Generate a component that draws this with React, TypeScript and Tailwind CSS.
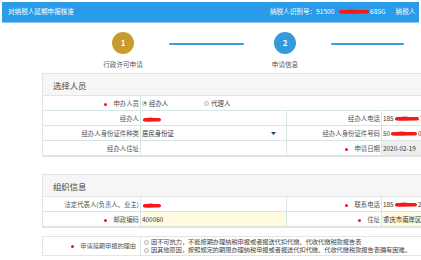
import React from 'react';

const font = { fontFamily: '"Noto Sans CJK SC", "Noto Sans", sans-serif' };

const Blob: React.FC<{ w: number }> = ({ w }) => (
  <svg width={w} height={7} viewBox={`0 0 ${w} 7`} className="inline-block align-middle">
    <path d={`M1 4 Q ${w * 0.3} 0.5 ${w * 0.6} 2 T ${w - 1} 3.5 Q ${w * 0.6} 6.5 1 5 Z`} fill="#f41b1b" />
    <rect x={1} y={2} width={w - 2} height={3.6} rx={1.8} fill="#f41b1b" />
  </svg>
);

const Req: React.FC = () => (
  <span className="inline-block w-[3px] h-[3px] rounded-full bg-[#e41b1b] mr-[6px] align-middle" />
);

const Radio: React.FC<{ on?: boolean }> = ({ on }) => (
  <span className="inline-flex items-center justify-center w-[5px] h-[5px] rounded-full border border-[#b8b8b8] bg-[#f2f2f2] mr-[2px] shrink-0">
    {on && <span className="w-[2px] h-[2px] rounded-full bg-[#666]" />}
  </span>
);

const Row: React.FC<{
  l1: React.ReactNode;
  v1?: React.ReactNode;
  l2: React.ReactNode;
  v2?: React.ReactNode;
  v1cls?: string;
  v2cls?: string;
}> = ({ l1, v1, l2, v2, v1cls = '', v2cls = '' }) => (
  <div className="flex h-[15px] border-b border-[#d8e5e5] text-[6.4px] leading-[15px]">
    <div className="w-[98px] shrink-0 text-right pr-[1px] text-[#555] border-r border-[#d8e5e5]">{l1}</div>
    <div className={`w-[146px] shrink-0 pl-[1px] text-[#333] border-r border-[#d8e5e5] relative ${v1cls}`}>{v1}</div>
    <div className="w-[95px] shrink-0 text-right pr-[1px] text-[#555] border-r border-[#d8e5e5]">{l2}</div>
    <div className={`flex-1 pl-[1px] text-[#333] whitespace-nowrap overflow-hidden ${v2cls}`}>{v2}</div>
  </div>
);

const Section: React.FC<{ title: string; children: React.ReactNode }> = ({ title, children }) => (
  <div className="ml-[42px] w-[400px] border border-[#e4e4e4]">
    <div className="h-[22px] bg-[#f6f6f6] border-b border-[#e4e4e4] pl-[10px] text-[8.4px] leading-[22px] text-[#444]">
      {title}
    </div>
    {children}
  </div>
);

const Step: React.FC<{ n: string; label: string; color: string }> = ({ n, label, color }) => (
  <div className="w-[50px] flex flex-col items-center">
    <div className={`w-[22px] h-[22px] rounded-full flex items-center justify-center text-white text-[8px] font-bold ${color}`}>
      {n}
    </div>
    <div className="mt-[6px] text-[6.6px] leading-[8px] text-[#555] whitespace-nowrap">{label}</div>
  </div>
);

const App: React.FC = () => {
  return (
    <div className="w-[421px] h-[260px] overflow-hidden bg-white relative" style={font}>
      <div className="mx-[2px] mt-[2px] h-[21px] bg-[#2a9be8] border-b border-[#8cc8f2] flex items-center text-white text-[6.6px] whitespace-nowrap">
        <span className="ml-[6px]">对纳税人延期申报核准</span>
        <span className="ml-[196px] flex items-center">
          纳税人识别号：91500<span className="text-[#2a9be8]">1</span>
          <Blob w={32} />
          685G
        </span>
        <span className="ml-[10px]">纳税人</span>
      </div>

      <div className="flex items-start pl-[98px] mt-[9px]">
        <Step n="1" label="行政许可申请" color="bg-[#c99a2c]" />
        <div className="ml-[21px] mt-[11px] w-[75px] h-[2px] rounded bg-[#3a9fe0]" />
        <div className="ml-[16px]">
          <Step n="2" label="申请信息" color="bg-[#3599dc]" />
        </div>
        <div className="ml-[21px] mt-[11px] w-[73px] h-[2px] rounded bg-[#3a9fe0]" />
      </div>

      <div className="mt-[5px]">
        <Section title="选择人员">
          <div className="flex h-[15px] border-b border-[#d8e5e5] text-[6.4px] leading-[15px]">
            <div className="w-[98px] shrink-0 text-right pr-[1px] text-[#555] border-r border-[#d8e5e5]">
              <Req />申办人员
            </div>
            <div className="flex items-center pl-[1px] text-[#444]">
              <Radio on />经办人
              <span className="ml-[36px] flex items-center">
                <Radio />代理人
              </span>
            </div>
          </div>
          <Row
            l1="经办人"
            v1={<Blob w={20} />}
            l2="经办人电话"
            v2={<span className="flex items-center">185<Blob w={26} />7</span>}
          />
          <Row
            l1="经办人身份证件种类"
            v1={
              <>
                居民身份证
                <svg width="5" height="3" viewBox="0 0 5 3" className="absolute right-[10px] top-[6px]">
                  <path d="M0 0 H5 L2.5 3 Z" fill="#1f3f7a" />
                </svg>
              </>
            }
            l2="经办人身份证件号码"
            v2={<span className="flex items-center">50<Blob w={28} />0</span>}
          />
          <Row
            l1="经办人住址"
            l2={<><Req />申请日期</>}
            v2="2020-02-19"
            v2cls="bg-[#eeeeee]"
          />
        </Section>
      </div>

      <div className="mt-[17px]">
        <Section title="组织信息">
          <Row
            l1="法定代表人(负责人、业主)"
            v1={<Blob w={20} />}
            l2={<><Req />联系电话</>}
            v2={<span className="flex items-center">185<Blob w={24} />22</span>}
          />
          <Row
            l1={<><Req />邮政编码</>}
            v1="400060"
            v1cls="bg-[#fffbe0]"
            l2={<><Req />住址</>}
            v2="重庆市南岸区"
            v2cls="bg-[#fffbe0]"
          />
        </Section>
      </div>

      <div className="mt-[8px] ml-[42px] w-[400px] border border-[#e4e4e4] flex text-[6.2px]">
        <div className="w-[98px] shrink-0 text-right pr-[4px] text-[#555] border-r border-[#d8e5e5] flex items-center justify-end h-[18px]">
          <Req />申请延期申报的理由
        </div>
        <div className="pl-[3px] pt-[1px] text-[#444] leading-[8px] whitespace-nowrap">
          <div className="flex items-center">
            <Radio />因不可抗力，不能按期办理纳税申报或者报送代扣代缴、代收代缴税款报告表
          </div>
          <div className="flex items-center">
            <Radio />因其他原因，按照规定的期限办理纳税申报或者报送代扣代缴、代收代缴税款报告表确有困难。
          </div>
        </div>
      </div>
    </div>
  );
};

export default App;
